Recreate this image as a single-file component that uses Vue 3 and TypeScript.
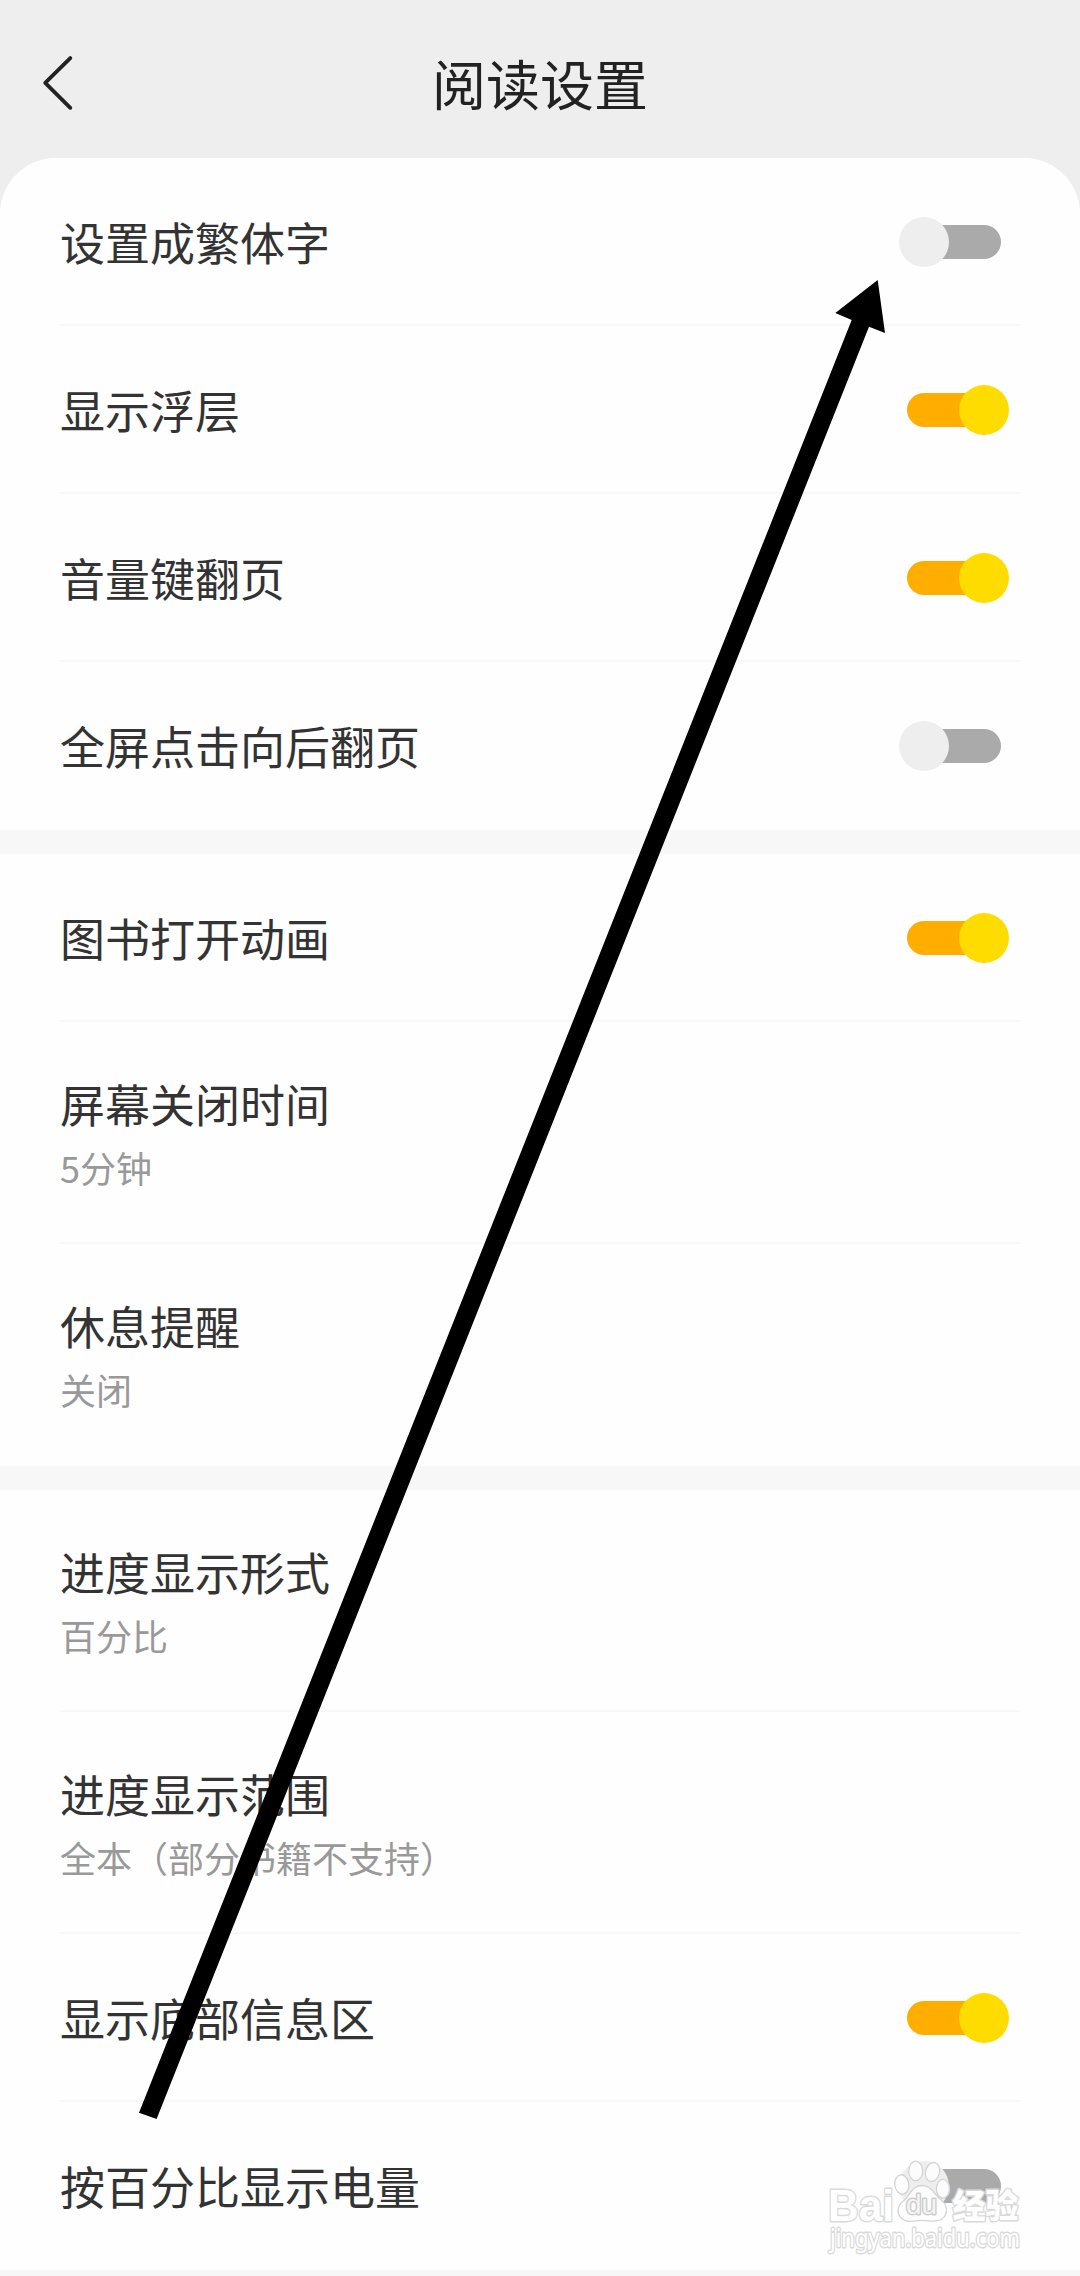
<script setup lang="ts">
interface Setting {
  title: string
  value?: string
  enabled?: boolean
}

const groups: Setting[][] = [
  [
    { title: '设置成繁体字', enabled: false },
    { title: '显示浮层', enabled: true },
    { title: '音量键翻页', enabled: true },
    { title: '全屏点击向后翻页', enabled: false },
  ],
  [
    { title: '图书打开动画', enabled: true },
    { title: '屏幕关闭时间', value: '5分钟' },
    { title: '休息提醒', value: '关闭' },
  ],
  [
    { title: '进度显示形式', value: '百分比' },
    { title: '进度显示范围', value: '全本（部分书籍不支持）' },
    { title: '显示底部信息区', enabled: true },
    { title: '按百分比显示电量', enabled: false },
  ],
]
</script>

<template>
  <div class="screen">
    <header class="header">
      <svg class="back" viewBox="0 0 32 56" width="32" height="56">
        <path d="M28.3 3.1 3.2 27.9 28.3 52.8" />
      </svg>
      <h1 class="heading">阅读设置</h1>
    </header>
    <main class="panel">
      <section v-for="(group, g) in groups" :key="g" class="group">
        <div
          v-for="item in group"
          :key="item.title"
          class="row"
          :class="{ detailed: item.value !== undefined }"
        >
          <div class="label">
            <span class="title">{{ item.title }}</span>
            <span v-if="item.value" class="value">{{ item.value }}</span>
          </div>
          <div v-if="item.enabled !== undefined" class="switch" :class="{ on: item.enabled }">
            <span class="track"></span>
            <span class="thumb"></span>
          </div>
        </div>
      </section>
    </main>

    <svg class="overlay" viewBox="0 0 1080 2276" width="1080" height="2276">
      <g class="mark">
        <text class="brand" x="828" y="2220.5" textLength="66" lengthAdjust="spacingAndGlyphs">Bai</text>
        <ellipse cx="901.8" cy="2184.5" rx="7" ry="9.8" transform="rotate(-8 901.8 2184.5)" />
        <ellipse cx="915.7" cy="2171" rx="7" ry="9.8" />
        <ellipse cx="932.5" cy="2172" rx="7" ry="9.6" transform="rotate(14 932.5 2172)" />
        <ellipse cx="943" cy="2188.8" rx="6.6" ry="9.4" />
        <path
          d="M922 2185.5c-10 0-12 10-18 15-7 5-7 12-4 16 4 6 10 5 16 4.3 4-.6 8-.6 13 0 6 .7 13 1 16-5 3-6 1-12-4-16-7-5-9-14.3-19-14.3z"
        />
        <text class="du" x="906" y="2213.5" textLength="31" lengthAdjust="spacingAndGlyphs">du</text>
        <text class="cn" x="952.5" y="2217.5" textLength="66" lengthAdjust="spacingAndGlyphs">经验</text>
        <text class="url" x="830" y="2246.5" textLength="190" lengthAdjust="spacingAndGlyphs">jingyan.baidu.com</text>
      </g>
      <polygon points="877.7,280 885,333 869,326.7 156.6,2119 139,2112.7 851.7,320 835.3,313" />
    </svg>
  </div>
</template>

<style>
body {
  margin: 0;
}
</style>

<style scoped>
.screen {
  position: relative;
  width: 1080px;
  height: 2276px;
  overflow: hidden;
  background: #eeeeee;
  font-family: "Noto Sans CJK SC", sans-serif;
}

.header {
  display: grid;
  grid-template-columns: 120px 1fr 120px;
  align-items: center;
  height: 158px;
  box-sizing: border-box;
  padding-top: 8px;
}

.back {
  margin-left: 42px;
  fill: none;
  stroke: #222222;
  stroke-width: 3.8;
  stroke-linecap: round;
  stroke-linejoin: round;
}

.heading {
  margin: 0;
  text-align: center;
  font-size: 54px;
  font-weight: 400;
  line-height: 80px;
  color: #222222;
}

.panel {
  display: flex;
  flex-direction: column;
  gap: 24px;
  border-radius: 56px 56px 0 0;
  overflow: hidden;
  background: #f7f7f7;
  padding-bottom: 24px;
}

.group {
  background: #fefefe;
}

.row {
  display: flex;
  justify-content: space-between;
  align-items: flex-start;
  height: 166px;
  margin: 0 60px;
  border-bottom: 2px solid #f7f7f7;
}

.row:last-child {
  border-bottom-color: transparent;
}

.row.detailed {
  height: 220px;
}

.label {
  display: flex;
  flex-direction: column;
  padding-top: 50px;
}

.detailed .label {
  padding-top: 48px;
}

.title {
  font-size: 45px;
  line-height: 68px;
  color: #333333;
}

.value {
  margin-top: 2px;
  font-size: 36px;
  line-height: 54px;
  color: #999999;
}

.switch {
  display: grid;
  align-items: center;
  width: 102px;
  height: 50px;
  margin: 59px 19px 0 0;
}

.switch.on {
  margin-right: 11px;
}

.track,
.thumb {
  grid-area: 1 / 1;
}

.track {
  justify-self: end;
  width: 94px;
  height: 34px;
  border-radius: 17px;
  background: #aaaaaa;
}

.thumb {
  justify-self: start;
  width: 50px;
  height: 50px;
  border-radius: 50%;
  background: #eeeeee;
}

.on .track {
  justify-self: start;
  background: #ffae00;
}

.on .thumb {
  justify-self: end;
  background: #ffdc00;
}

.overlay {
  position: absolute;
  top: 0;
  left: 0;
}

.mark {
  fill: #ffffff;
  fill-opacity: 0.82;
  stroke: #d4d4d4;
  stroke-width: 1.3;
}

.mark text {
  paint-order: stroke;
  stroke: #dadada;
  stroke-width: 2.8;
  stroke-linejoin: round;
  fill-opacity: 1;
}

.brand {
  font: 700 45px "Liberation Sans", sans-serif;
}

.mark .du {
  font: 400 27px "Liberation Sans", sans-serif;
  fill: #f4f4f4;
  stroke: #cccccc;
}

.cn {
  font: 900 33px "Noto Sans CJK SC", sans-serif;
}

.url {
  font: 400 25px "Noto Sans", sans-serif;
}
</style>
